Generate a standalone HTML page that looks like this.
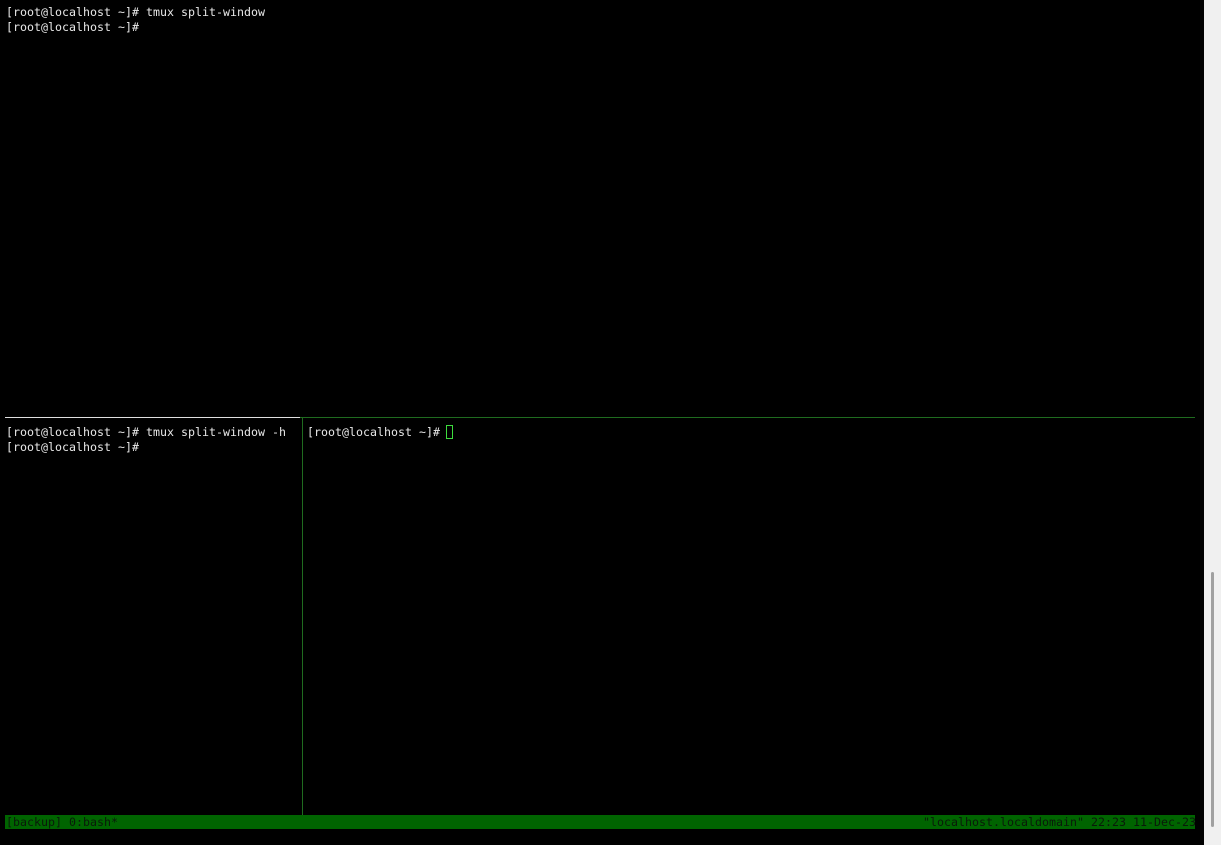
<!DOCTYPE html>
<html><head><meta charset="utf-8"><style>
html,body{margin:0;padding:0;background:#000;width:1221px;height:845px;overflow:hidden;position:relative}
.t{position:absolute;font-family:"DejaVu Sans Mono","Liberation Mono",monospace;font-size:11.63px;line-height:15px;color:#e8e8e8;white-space:pre}
.a{position:absolute}
</style></head><body>
<div class="t" style="left:6px;top:5px">[root@localhost ~]# tmux split-window
[root@localhost ~]#</div>
<div class="a" style="left:5px;top:417px;width:295px;height:1px;background:#e0e0e0"></div>
<div class="a" style="left:300px;top:417px;width:895px;height:1px;background:#1f6b1f"></div>
<div class="a" style="left:302px;top:418px;width:1px;height:397px;background:#1f6b1f"></div>
<div class="t" style="left:6px;top:425px">[root@localhost ~]# tmux split-window -h
[root@localhost ~]#</div>
<div class="t" style="left:307px;top:425px">[root@localhost ~]# </div>
<div class="a" style="left:446px;top:425px;width:5px;height:12px;border:1px solid #3ddc3d"></div>
<div class="a" style="left:5px;top:815px;width:1190px;height:14px;background:#006400"></div>
<div class="t" style="left:6px;top:815px;color:#0a1a0a">[backup] 0:bash*</div>
<div class="t" style="left:923px;top:815px;color:#0a1a0a">"localhost.localdomain" 22:23 11-Dec-23</div>
<div class="a" style="left:1204px;top:0;width:17px;height:845px;background:#f0f0f0"></div>
<div class="a" style="left:1211px;top:572px;width:3px;height:255px;background:#a0a0a0;border-radius:2px"></div>
</body></html>
